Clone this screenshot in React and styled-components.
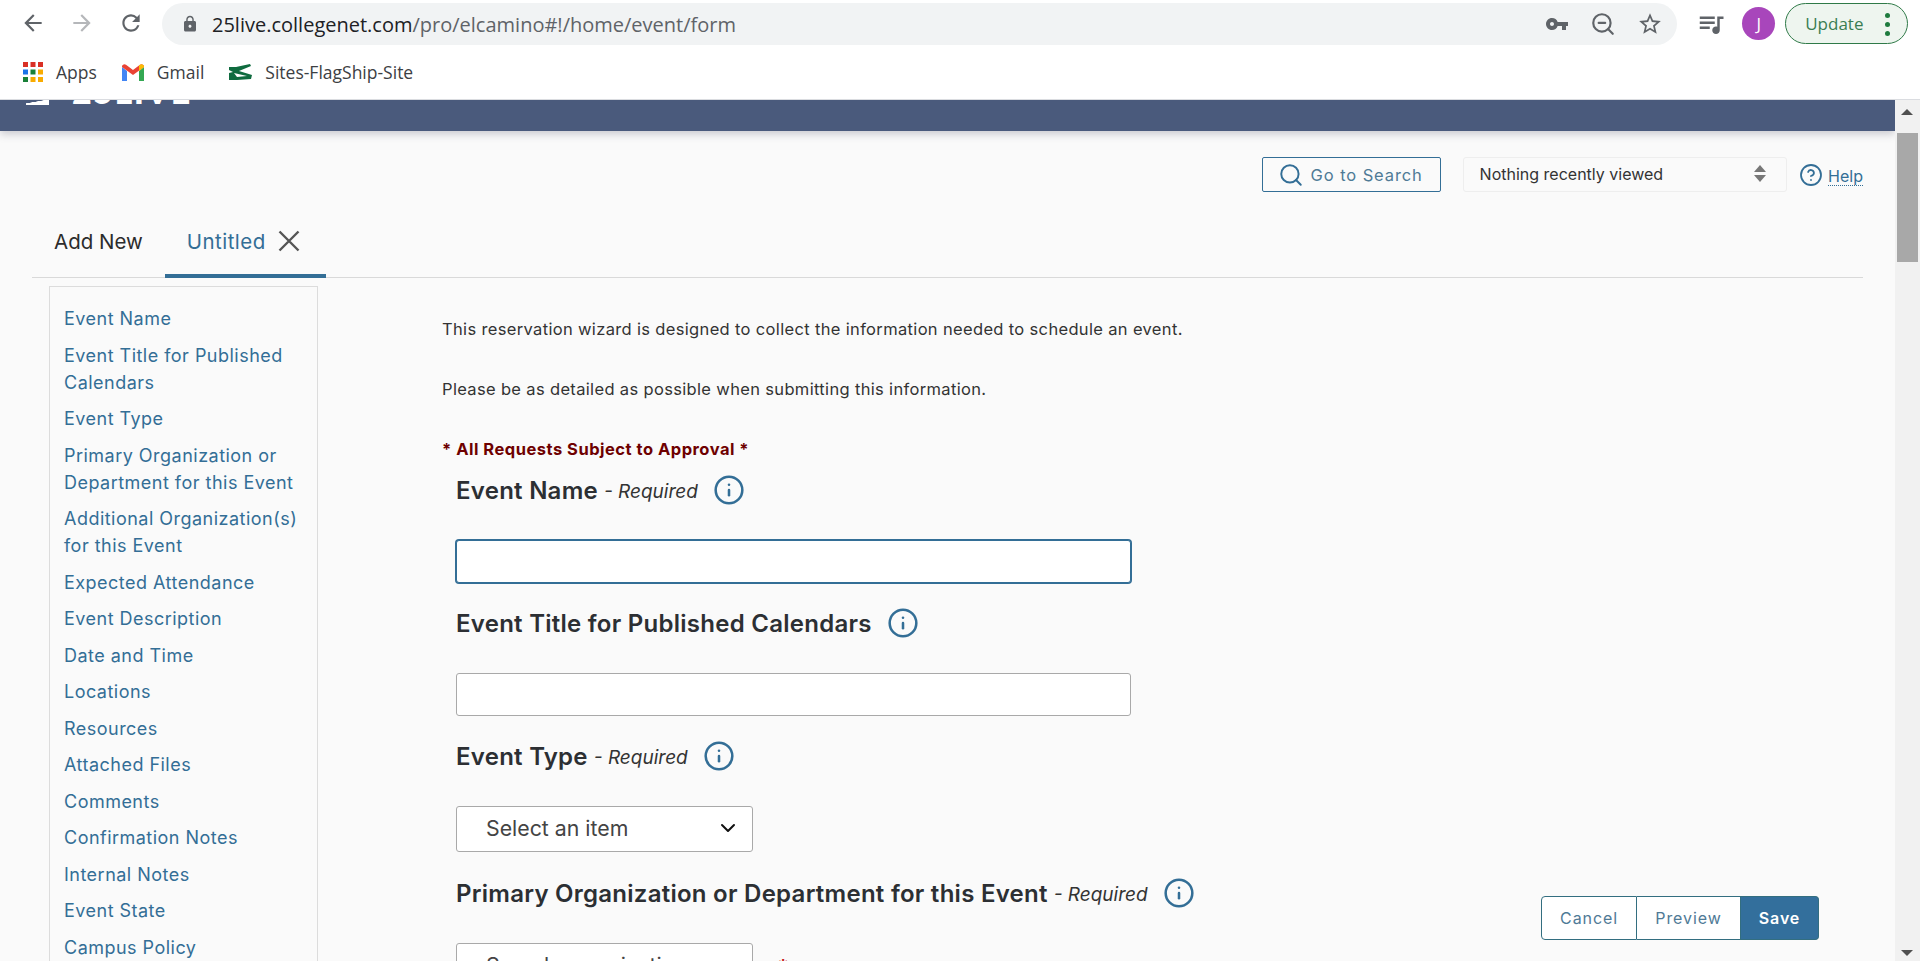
import styled, { createGlobalStyle } from "styled-components"
import { MdArrowBack, MdArrowForward, MdRefresh, MdLock, MdVpnKey, MdStarBorder, MdQueueMusic } from "react-icons/md"
import { Search, ChevronDown, Info, HelpCircle, ZoomOut } from "lucide-react"

const Global = createGlobalStyle`
    html, body { margin: 0; height: 100%; overflow: hidden; background: #fff; }
    * { box-sizing: border-box; }
    body { font-family: "Inter", "Liberation Sans", sans-serif; }
`
const Shell = styled.div`
    width: 1920px;
    height: 961px;
    display: flex;
    flex-direction: column;
    overflow: hidden;
`
const Chrome = styled.div`
    height: 100px;
    flex: none;
    background: #fff;
    border-bottom: 1px solid #dadce0;
    font-family: "Open Sans", "Noto Sans", sans-serif;
`
const AddressRow = styled.div`
    height: 45px;
    padding: 3px 12px 0 20px;
    display: flex;
    align-items: flex-start;
`
const NavBtn = styled.span`
    width: 26px;
    height: 26px;
    margin: 7px 23px 0 0;
    font-size: 26px;
    line-height: 0;
    color: ${(p) => (p.$off ? "#b5b7ba" : "#5f6368")};
`
const Omnibox = styled.div`
    width: 1518px;
    height: 42px;
    margin-left: -5px;
    border-radius: 21px;
    background: #f1f3f4;
    display: flex;
    align-items: center;
    padding: 0 14px 0 19px;
`
const LockIcon = styled(MdLock)`
    font-size: 18px;
    color: #5f6368;
    flex: none;
`
const Url = styled.div`
    margin-left: 13px;
    font-size: 20px;
    color: #5f6368;
    flex: 1;
    white-space: nowrap;
    b { font-weight: 400; color: #202124; }
`
const OmniIcon = styled.span`
    font-size: ${(p) => p.$size || 26}px;
    line-height: 0;
    color: #5f6368;
    margin-left: 21px;
`
const MusicBtn = styled.span`
    font-size: 30px;
    line-height: 0;
    color: #5f6368;
    margin: 6px 0 0 19px;
`
const Avatar = styled.div`
    width: 33px;
    height: 33px;
    margin: 4px 0 0 16px;
    border-radius: 50%;
    background: #a846bb;
    color: #fff;
    font-size: 17px;
    display: flex;
    align-items: center;
    justify-content: center;
`
const UpdatePill = styled.div`
    width: 123px;
    height: 41px;
    margin-left: 10px;
    border: 1.5px solid #2f7a48;
    border-radius: 21px;
    background: #eef5ef;
    color: #3a7d52;
    font-size: 17px;
    display: flex;
    align-items: center;
    padding-left: 19px;
    position: relative;
`
const Dots = styled.span`
    position: absolute;
    right: 17px;
    top: 9px;
    display: flex;
    flex-direction: column;
    gap: 4px;
    i { width: 5px; height: 5px; border-radius: 50%; background: #1e7b3e; display: block; }
`
const BookmarkRow = styled.div`
    height: 54px;
    padding: 0 0 0 23px;
    display: flex;
    align-items: center;
`
const Bookmark = styled.div`
    display: flex;
    align-items: center;
    gap: 13px;
    margin-right: 25px;
    font-size: 17.5px;
    color: #3c4043;
    svg { flex: none; }
`
const PageRow = styled.div`
    flex: 1;
    display: flex;
    min-height: 0;
`
const Main = styled.div`
    flex: 1;
    background: #fafafa;
    position: relative;
    overflow: hidden;
    font-family: "Inter", sans-serif;
`
const Header = styled.div`
    height: 31px;
    background: #4a5a7c;
    box-shadow: 0 3px 8px rgba(60, 60, 80, 0.25);
    overflow: hidden;
    display: flex;
    align-items: flex-start;
    padding-left: 26px;
`
const LogoMark = styled.span`
    width: 23px;
    height: 5px;
    background: linear-gradient(170deg, transparent 35%, #fff 40%);
`
const LogoText = styled.span`
    margin: -27px 0 0 23px;
    font-family: "Lato", sans-serif;
    font-weight: 900;
    font-size: 34px;
    line-height: 36px;
    color: #fff;
    letter-spacing: 1.5px;
`
const TopRow = styled.div`
    margin-top: 26px;
    padding-right: 32px;
    height: 35px;
    display: flex;
    justify-content: flex-end;
    align-items: center;
`
const SearchBtn = styled.div`
    width: 179px;
    height: 35px;
    border: 1px solid #336e96;
    border-radius: 2px;
    display: flex;
    align-items: center;
    gap: 7px;
    padding-left: 15px;
    font-size: 16.5px;
    letter-spacing: 0.9px;
    color: #4f7a96;
`
const Recent = styled.div`
    width: 324px;
    height: 35px;
    margin-left: 22px;
    border: 1px solid #eeeeee;
    border-radius: 3px;
    display: flex;
    align-items: center;
    justify-content: space-between;
    padding: 0 20px 2px 16px;
    font-size: 16px;
    color: #333;
`
const Updown = styled.span`
    display: flex;
    flex-direction: column;
    gap: 3px;
    i { width: 0; height: 0; border-left: 6px solid transparent; border-right: 6px solid transparent; display: block; }
    i:first-child { border-bottom: 7px solid #777; }
    i:last-child { border-top: 7px solid #777; }
`
const HelpLink = styled.div`
    margin-left: 12.5px;
    display: flex;
    align-items: center;
    gap: 5px;
    color: #336e96;
    font-size: 16px;
    span { border-bottom: 1px dotted #336e96; line-height: 18px; margin-top: 3px; }
`
const Tabs = styled.div`
    margin: 0 32px;
    height: 86px;
    border-bottom: 1px solid #d9d9d9;
    display: flex;
    align-items: flex-end;
`
const Tab = styled.div`
    height: 50px;
    margin-bottom: -1px;
    padding: 0 ${(p) => (p.$active ? 26 : 22)}px 20px 22px;
    display: flex;
    align-items: center;
    gap: 12px;
    font-size: 20.5px;
    letter-spacing: ${(p) => (p.$active ? 0.45 : 0)}px;
    color: ${(p) => (p.$active ? "#336e96" : "#2c2c2c")};
    border-bottom: 4px solid ${(p) => (p.$active ? "#336e96" : "transparent")};
`
const Body = styled.div`
    display: flex;
    align-items: flex-start;
    padding-left: 49px;
`
const SideNav = styled.div`
    width: 269px;
    height: 700px;
    flex: none;
    margin-top: 8px;
    border: 1px solid #dcdcdc;
    padding: 18px 14px 0;
`
const SideLink = styled.div`
    font-size: 18px;
    line-height: 27px;
    margin-bottom: 9.5px;
    color: #336e96;
    letter-spacing: 0.48px;
`
const Content = styled.div`
    margin-left: 124px;
    padding-top: 39px;
    width: 800px;
`
const Intro = styled.div`
    font-size: 16.5px;
    line-height: 24px;
    margin-bottom: 36px;
    letter-spacing: 0.34px;
    color: #333;
`
const Notice = styled.div`
    font-size: 16.5px;
    line-height: 24px;
    font-weight: 700;
    letter-spacing: 0.5px;
    color: #6e0000;
    margin-bottom: 13px;
`
const FieldHead = styled.div`
    margin-left: 14px;
    height: 32px;
    display: flex;
    align-items: center;
    color: #2c2f33;
    font-size: 24px;
    font-weight: 600;
    letter-spacing: 0.26px;
    white-space: nowrap;
    em { font-size: 19px; font-weight: 400; margin: 2px 0 0 6px; color: #333; letter-spacing: 0; }
    svg { margin-left: 15px; color: #336e96; flex: none; }
`
const TextBox = styled.div`
    margin: 34px 0 24px 14px;
    width: 675px;
    height: 43px;
    background: #fff;
    border-radius: 3px;
    border: 1px solid ${(p) => (p.$focus ? "#336e96" : "#a9a9a9")};
    box-shadow: ${(p) => (p.$focus ? "0 0 0 1px #336e96" : "none")};
`
const Picker = styled.div`
    margin: 34px 0 25px 14px;
    width: 297px;
    height: 46px;
    background: #fff;
    border-radius: 3px;
    border: 1px solid #a9a9a9;
    display: flex;
    align-items: center;
    justify-content: space-between;
    padding: 0 12px 2px 29px;
    font-size: 21.3px;
    color: #444;
    svg { color: #111; }
`
const PickerRow = styled.div`
    display: flex;
    align-items: flex-start;
    gap: 24px;
`
const RequiredMark = styled.span`
    margin-top: 47px;
    color: #c8201a;
    font-size: 22px;
    line-height: 22px;
    font-weight: 700;
`
const Actions = styled.div`
    position: absolute;
    right: 76px;
    bottom: 21px;
    display: flex;
    height: 44px;
`
const ActionBtn = styled.div`
    display: flex;
    align-items: center;
    justify-content: center;
    width: ${(p) => p.$w}px;
    font-size: 16px;
    letter-spacing: 0.9px;
    font-weight: ${(p) => (p.$primary ? 600 : 400)};
    color: ${(p) => (p.$primary ? "#fff" : "#4f7a96")};
    background: ${(p) => (p.$primary ? "#336f9c" : "#fff")};
    border: 1px solid #336e80;
    border-left-width: ${(p) => (p.$first ? 1 : 0)}px;
    border-radius: ${(p) => (p.$first ? "4px 0 0 4px" : p.$primary ? "0 4px 4px 0" : "0")};
`
const Scrollbar = styled.div`
    width: 25px;
    flex: none;
    background: #f1f1f1;
    display: flex;
    flex-direction: column;
    align-items: center;
    position: relative;
`
const Arrow = styled.span`
    width: 0;
    height: 0;
    position: absolute;
    left: 6px;
    border-left: 6px solid transparent;
    border-right: 6px solid transparent;
    ${(p) => (p.$down ? "bottom: 5px; border-top: 6px solid #505050;" : "top: 9px; border-bottom: 6px solid #505050;")}
`
const Thumb = styled.div`
    width: 21px;
    height: 129px;
    margin-top: 33px;
    background: #a8a8a8;
`

const links = ["Event Name", "Event Title for Published Calendars", "Event Type", "Primary Organization or Department for this Event", "Additional Organization(s) for this Event", "Expected Attendance", "Event Description", "Date and Time", "Locations", "Resources", "Attached Files", "Comments", "Confirmation Notes", "Internal Notes", "Event State", "Campus Policy"]

const appColors = ["#d93025", "#d93025", "#d93025", "#1a73e8", "#188038", "#f9ab00", "#188038", "#f9ab00", "#f9ab00"]

const AppsIcon = () => (
  <svg width="20" height="20" viewBox="0 0 20 20">
    {appColors.map((c, i) => <rect key={i} x={(i % 3) * 7.5} y={Math.floor(i / 3) * 7.5} width="5" height="5" fill={c} />)}
  </svg>
)

const GmailIcon = () => (
  <svg width="22" height="17" viewBox="0 0 22 17">
    <path d="M0 3v14h5V7z" fill="#4285f4" />
    <path d="M17 7v10h5V3z" fill="#34a853" />
    <path d="M0 3l11 8 11-8V2.500C22 0.500 19.500-0.500 18 0.700L11 6 4 0.700C2.500-0.500 0 0.500 0 2.500z" fill="#ea4335" />
    <path d="M17 7l5-4V2.500C22 0.500 19.500-0.500 18 0.700L17 1.500z" fill="#fbbc04" />
  </svg>
)

const GatorIcon = () => (
  <svg width="23" height="16" viewBox="0 0 23 16">
    <path d="M0 3L7 3L21 0L22 2L10 7L23 11L22 15L8 16L0 16L0 9L4 8L0 6z" fill="#0f6b3f" />
    <path d="M5 9L18 12L8 13z" fill="#fff" />
  </svg>
)

const CloseIcon = () => (
  <svg width="22" height="22" viewBox="0 0 22 22">
    <path d="M1.500 1.500L20.500 20.500M20.500 1.500L1.500 20.500" stroke="#555" strokeWidth="2.400" fill="none" />
  </svg>
)

const App = () => {
  return (
    <Shell>
      <Global />
      <Chrome>
        <AddressRow>
          <NavBtn><MdArrowBack /></NavBtn>
          <NavBtn $off><MdArrowForward /></NavBtn>
          <NavBtn><MdRefresh /></NavBtn>
          <Omnibox>
            <LockIcon />
            <Url><b>25live.collegenet.com</b>/pro/elcamino#!/home/event/form</Url>
            <OmniIcon $size={24}><MdVpnKey /></OmniIcon>
            <OmniIcon><ZoomOut size={26} strokeWidth={2} /></OmniIcon>
            <OmniIcon><MdStarBorder /></OmniIcon>
          </Omnibox>
          <MusicBtn><MdQueueMusic /></MusicBtn>
          <Avatar>J</Avatar>
          <UpdatePill>Update<Dots><i /><i /><i /></Dots></UpdatePill>
        </AddressRow>
        <BookmarkRow>
          <Bookmark><AppsIcon />Apps</Bookmark>
          <Bookmark><GmailIcon />Gmail</Bookmark>
          <Bookmark><GatorIcon />Sites-FlagShip-Site</Bookmark>
        </BookmarkRow>
      </Chrome>
      <PageRow>
        <Main>
          <Header>
            <LogoMark />
            <LogoText>25LIVE</LogoText>
          </Header>
          <TopRow>
            <SearchBtn><Search size={26} strokeWidth={1.8} color="#336e96" />Go to Search</SearchBtn>
            <Recent>Nothing recently viewed<Updown><i /><i /></Updown></Recent>
            <HelpLink><HelpCircle size={24} strokeWidth={1.8} /><span>Help</span></HelpLink>
          </TopRow>
          <Tabs>
            <Tab>Add New</Tab>
            <Tab $active>Untitled<CloseIcon /></Tab>
          </Tabs>
          <Body>
            <SideNav>
              {links.map((l) => <SideLink key={l}>{l}</SideLink>)}
            </SideNav>
            <Content>
              <Intro>This reservation wizard is designed to collect the information needed to schedule an event.</Intro>
              <Intro>Please be as detailed as possible when submitting this information.</Intro>
              <Notice>* All Requests Subject to Approval *</Notice>
              <FieldHead>Event Name<em>- Required</em><Info size={32} strokeWidth={1.9} /></FieldHead>
              <TextBox $focus />
              <FieldHead>Event Title for Published Calendars<Info size={32} strokeWidth={1.9} /></FieldHead>
              <TextBox />
              <FieldHead>Event Type<em>- Required</em><Info size={32} strokeWidth={1.9} /></FieldHead>
              <Picker>Select an item<ChevronDown size={24} strokeWidth={2} /></Picker>
              <FieldHead>Primary Organization or Department for this Event<em>- Required</em><Info size={32} strokeWidth={1.9} /></FieldHead>
              <PickerRow>
                <Picker>Search organizations</Picker>
                <RequiredMark>*</RequiredMark>
              </PickerRow>
            </Content>
          </Body>
          <Actions>
            <ActionBtn $first $w={96}>Cancel</ActionBtn>
            <ActionBtn $w={104}>Preview</ActionBtn>
            <ActionBtn $primary $w={78}>Save</ActionBtn>
          </Actions>
        </Main>
        <Scrollbar>
          <Arrow />
          <Thumb />
          <Arrow $down />
        </Scrollbar>
      </PageRow>
    </Shell>
  )
}

export default App
